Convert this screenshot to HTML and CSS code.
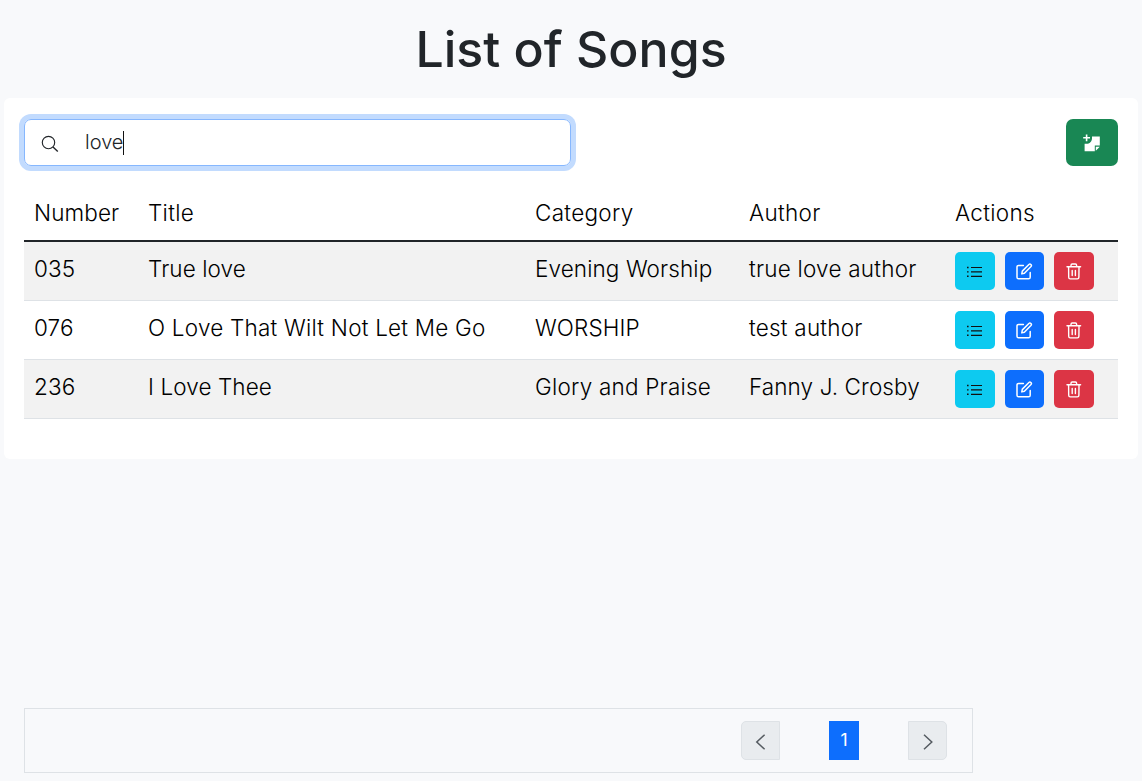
FILE: index.html
```html
<!DOCTYPE html>
<html lang="en">
<head>
<meta charset="utf-8">
<title>List of Songs</title>
<link rel="stylesheet" href="styles.css">
</head>
<body>
<svg class="sprite" width="0" height="0" aria-hidden="true">
  <symbol id="list" viewBox="0 0 16 12"><path fill="#111" d="M4 .9h11v1.2H4zM4 5.3h11v1.2H4zM4 9.7h11v1.2H4zM0 .8h1.6v1.4H0zM0 5.2h1.6v1.4H0zM0 9.6h1.6V11H0z"/></symbol>
  <symbol id="edit" viewBox="0 0 17 17"><g fill="none" stroke="#fff" stroke-width="1.5" stroke-linejoin="round" stroke-linecap="round"><path d="M7.4 2.4H2.6C1.6 2.4 1 3 1 4v10.2c0 1 .6 1.6 1.6 1.6h10c1 0 1.6-.6 1.6-1.6V9.6"/><path d="M5.8 10.9l.5-2.8 6.6-6.6c1.3-1.2 3.3.7 2.1 2L8.4 10.2z"/></g></symbol>
  <symbol id="trash" viewBox="0 0 16 17"><g fill="none" stroke="#fff" stroke-width="1.4" stroke-linejoin="round" stroke-linecap="round"><path d="M1 3.8h13.6M5 3.7V2.2C5 1.4 5.4 1 6.2 1h3.2c.8 0 1.2.4 1.2 1.2v1.5M2.6 4l.1 10.3c0 1 .6 1.6 1.6 1.6h7c1 0 1.6-.6 1.6-1.6L13 4M6.2 7.4v5.2M9.4 7.4v5.2"/></g></symbol>
</svg>
<h1 class="heading">List of Songs</h1>
<main class="card">
  <div class="toolbar">
    <div class="search">
      <svg width="18" height="18" viewBox="0 0 18 18"><g fill="none" stroke="#212529" stroke-width="1.15"><circle cx="7.5" cy="7.5" r="6.2"/><path d="M12 12l4.8 4.6" stroke-width="1.4"/></g></svg>
      <span class="query">love</span><span class="caret"></span>
    </div>
    <button class="btn add" aria-label="Add song"><svg width="18" height="18" viewBox="0 0 18 18"><path fill="#fff" d="M9 2.4h7.8v9.2h-5v5.6H1.6V9.8h2C6.500 9.800 9 7.300 9 4.400zM12.800 12.800h4l-4 4zM2.800.4h1.600v2.600H7v1.600H4.400v2.600H2.800V4.600H.200V3h2.600z"/></svg></button>
  </div>
  <table class="songs">
    <colgroup><col class="c-number"><col class="c-title"><col class="c-category"><col class="c-author"><col></colgroup>
    <thead><tr><th>Number</th><th>Title</th><th>Category</th><th>Author</th><th>Actions</th></tr></thead>
    <tbody>
      <tr><td>035</td><td>True love</td><td>Evening Worship</td><td class="loose">true love author</td><td><div class="actions"><button class="btn view"><svg width="16" height="12"><use href="#list"/></svg></button><button class="btn edit"><svg width="17" height="17"><use href="#edit"/></svg></button><button class="btn delete"><svg width="16" height="17"><use href="#trash"/></svg></button></div></td></tr>
      <tr><td>076</td><td class="loose">O Love That Wilt Not Let Me Go</td><td>WORSHIP</td><td class="loose">test author</td><td><div class="actions"><button class="btn view"><svg width="16" height="12"><use href="#list"/></svg></button><button class="btn edit"><svg width="17" height="17"><use href="#edit"/></svg></button><button class="btn delete"><svg width="16" height="17"><use href="#trash"/></svg></button></div></td></tr>
      <tr><td>236</td><td>I Love Thee</td><td class="loose">Glory and Praise</td><td>Fanny J. Crosby</td><td><div class="actions"><button class="btn view"><svg width="16" height="12"><use href="#list"/></svg></button><button class="btn edit"><svg width="17" height="17"><use href="#edit"/></svg></button><button class="btn delete"><svg width="16" height="17"><use href="#trash"/></svg></button></div></td></tr>
    </tbody>
  </table>
</main>
<nav class="pager">
  <span class="step prev"><svg width="18" height="18" viewBox="0 0 18 18"><path d="M12.600 1.800L4.800 9l7.800 7.200" /></svg></span>
  <span class="page">1</span>
  <span class="step next"><svg width="18" height="18" viewBox="0 0 18 18"><path d="M5 1.800L12.800 9 5 16.200" /></svg></span>
</nav>
</body>
</html>
```
FILE: styles.css
```css
* { box-sizing: border-box; }
body {
  margin: 0;
  height: 781px;
  padding: 19px 4px 8px;
  display: flex;
  flex-direction: column;
  overflow: hidden;
  background: #f8f9fb;
  color: #212529;
  font-family: Inter, "Liberation Sans", sans-serif;
  font-weight: 300;
}
.sprite { position: absolute; }
.heading {
  margin: 0 0 19px;
  font-size: 50px;
  line-height: 60px;
  font-weight: 500;
  text-align: center;
}
.card {
  height: 361px;
  padding: 21px 20px;
  background: #fff;
  border-radius: 6px;
}
.toolbar {
  display: flex;
  justify-content: space-between;
  height: 47px;
  margin-bottom: 18px;
}
.search {
  display: flex;
  align-items: center;
  width: 547px;
  padding-left: 16px;
  border: 1px solid #86b7fe;
  border-radius: 7px;
  box-shadow: 0 0 0 5px #c2dbfe;
  font-size: 20px;
  line-height: 30px;
}
.search svg { margin-top: 3px; }
.query { margin: -1px 0 0 26px; }
.caret { width: 1px; height: 24px; background: #111; }
.btn {
  display: flex;
  align-items: center;
  justify-content: center;
  padding: 0;
  border: 0;
  border-radius: 5px;
}
.add { width: 52px; background: #198754; border-radius: 7px; }
.songs {
  width: 1094px;
  table-layout: fixed;
  border-collapse: separate;
  border-spacing: 0;
  color: #000;
  font-size: 22.5px;
  line-height: 34px;
  letter-spacing: 0.1px;
}
.c-number { width: 114px; }
.c-title { width: 387px; }
.c-category { width: 214px; }
.c-author { width: 206px; }
.songs th {
  height: 58px;
  padding: 12px 10px 10px;
  border-bottom: 2px solid #212529;
  font-weight: 300;
  text-align: left;
  letter-spacing: 0.3px;
}
.songs th:first-child { letter-spacing: 0.1px; }
.songs td {
  height: 59px;
  padding: 10px;
  border-bottom: 1px solid #dee2e6;
  vertical-align: top;
  white-space: nowrap;
}
.songs .loose { letter-spacing: 0.22px; }
.songs tbody tr:nth-child(odd) { background: #f2f2f2; }
.actions { display: flex; gap: 10px; }
.actions .btn { height: 38px; }
.actions svg { margin-top: 1px; }
.view { width: 40px; background: #0dcaf0; }
.edit { width: 39px; background: #0d6efd; }
.delete { width: 40px; background: #dc3545; }
.pager {
  display: flex;
  align-items: center;
  justify-content: flex-end;
  gap: 49px;
  width: 949px;
  height: 65px;
  margin: auto 0 0 20px;
  padding-right: 25px;
  border: 1px solid #dee2e6;
}
.step {
  display: flex;
  align-items: center;
  justify-content: center;
  width: 39px;
  height: 39px;
  padding-top: 2px;
  border: 1px solid #dee2e6;
  background: #e9ecef;
}
.step path { fill: none; stroke: #555b61; stroke-width: 1.5; }
.prev { border-radius: 5px 0 0 5px; }
.next { border-radius: 0 5px 5px 0; }
.page {
  width: 30px;
  height: 39px;
  background: #0d6efd;
  color: #fff;
  font-size: 17.5px;
  font-weight: 400;
  line-height: 38px;
  text-align: center;
}
```
